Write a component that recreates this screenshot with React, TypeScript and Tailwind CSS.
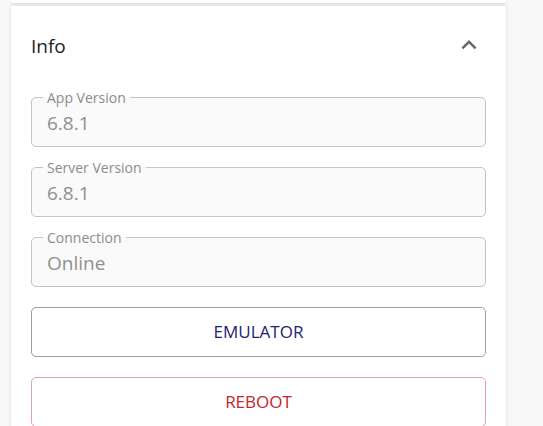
import React from "react";

function ReadField({ label, value }: { label: string; value: string }) {
  return (
    <fieldset className="h-[57px] rounded-[5px] border border-[#c4c4c4] bg-[#fafafa] px-[15px]">
      <legend className="ml-[-4px] px-[4px] text-[14px] leading-[15px] text-[#8c8c8c]">{label}</legend>
      <div className="mt-[7px] text-[19px] leading-[22px] text-[#8f8f8f]">{value}</div>
    </fieldset>
  );
}

export default function App() {
  return (
    <div
      className="h-[426px] w-[543px] overflow-hidden bg-[#f8f8f8]"
      style={{ fontFamily: '"Open Sans", "Noto Sans", sans-serif' }}
    >
      <div className="ml-[11px] w-[495px]">
        <div className="h-[3px] bg-white shadow-[0_1px_2px_rgba(0,0,0,0.12)]" />
        <div className="mt-[3px] bg-white shadow-[0_0_3px_rgba(0,0,0,0.15)] px-[20px] pb-[20px]">
          <div className="flex h-[80px] items-center justify-between">
            <span className="text-[19px] text-[#222]">Info</span>
            <svg width="30" height="30" viewBox="0 0 24 24" className="mr-[2px] mb-[2px]">
              <path d="M7.4 15.4 12 10.8l4.6 4.6L18 14l-6-6-6 6z" fill="#666" />
            </svg>
          </div>
          <div className="mt-[4px] flex flex-col gap-[13px]">
            <ReadField label="App Version" value="6.8.1" />
            <ReadField label="Server Version" value="6.8.1" />
            <ReadField label="Connection" value="Online" />
          </div>
          <div className="mt-[20px] flex flex-col gap-[20px]">
            <button className="h-[50px] rounded-[5px] border border-[#9c9cb0] bg-white text-[17px] text-[#1e2270]">
              EMULATOR
            </button>
            <button className="h-[50px] rounded-[5px] border border-[#e3a2a6] bg-white text-[17px] text-[#c3252c]">
              REBOOT
            </button>
          </div>
        </div>
      </div>
    </div>
  );
}
